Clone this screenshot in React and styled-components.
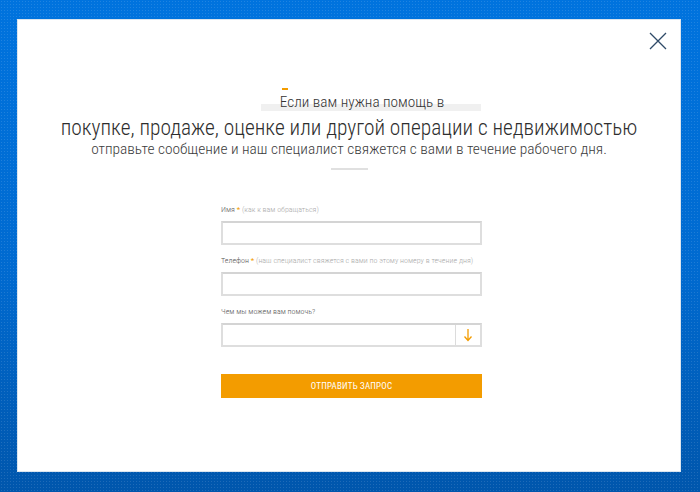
import React from "react";
import styled, { createGlobalStyle } from "styled-components";

const Global = createGlobalStyle`
  html, body {
    margin: 0;
    padding: 0;
  }
  body {
    width: 700px;
    height: 492px;
    overflow: hidden;
    font-family: "Roboto Condensed", "Liberation Sans Narrow", "DejaVu Sans Condensed", Roboto, sans-serif;
    font-weight: 300;
    background-color: #0066cc;
    background-image:
      radial-gradient(rgba(255, 255, 255, 0.12) 0.6px, transparent 0.9px),
      linear-gradient(180deg, #0073de 0%, #006ad0 55%, #0056ac 100%);
    background-size: 3px 3px, 100% 100%;
  }
`;

const Page = styled.div`
  padding: 19px 19px 20px 17px;
  box-sizing: border-box;
  height: 492px;
`;

const Modal = styled.div`
  position: relative;
  width: 664px;
  height: 453px;
  box-sizing: border-box;
  background: #fff;
  border: 1px solid #dbe5ef;
  padding-top: 73px;
  display: flex;
  flex-direction: column;
  align-items: center;
`;

const Close = styled.button`
  position: absolute;
  top: 12px;
  right: 13px;
  width: 18px;
  height: 18px;
  padding: 0;
  border: 0;
  background: none;
  cursor: pointer;
`;

const Lead = styled.div`
  position: relative;
  margin-left: 44px;
  padding: 0 37px 0 19px;
  font-size: 15.3px;
  line-height: 18px;
  color: #333;
  background: linear-gradient(180deg, transparent 0, transparent 11px, #f0f0f0 11px, #f0f0f0 18px, transparent 18px);

  &::before {
    content: "";
    position: absolute;
    left: 21px;
    top: -5px;
    width: 6px;
    height: 2px;
    background: #f39c00;
  }
`;

const Title = styled.h1`
  margin: 4px 0 0;
  font-size: 21.4px;
  font-weight: 300;
  line-height: 26px;
  color: #2e2e2e;
  white-space: nowrap;
`;

const Sub = styled.p`
  margin: 0;
  font-size: 15.4px;
  line-height: 16px;
  color: #3c3c3c;
  white-space: nowrap;
`;

const Divider = styled.div`
  width: 37px;
  height: 2px;
  margin-top: 11px;
  background: #e0e0e0;
`;

const Form = styled.form`
  width: 261px;
  margin-top: 35px;
  margin-left: 5px;
  display: flex;
  flex-direction: column;
`;

const Field = styled.div`
  margin-bottom: 11px;
`;

const Label = styled.label`
  display: block;
  font-size: 8px;
  line-height: 10px;
  color: #555;
  margin-bottom: 6px;

  b {
    font-weight: 400;
    color: #f39c00;
  }
  span {
    color: #aaa;
  }
`;

const Input = styled.input`
  display: block;
  width: 100%;
  height: 24px;
  box-sizing: border-box;
  border: 2px solid #dedede;
  border-top-color: #d4d4d4;
  background: #fff;
  outline: none;
  font: inherit;
  font-size: 11px;
  padding: 0 6px;
`;

const Select = styled.div`
  display: flex;
  height: 24px;
  box-sizing: border-box;
  border: 2px solid #dedede;
  border-top-color: #d4d4d4;
`;

const SelectValue = styled.div`
  flex: 1;
`;

const SelectArrow = styled.div`
  width: 24px;
  border-left: 1px solid #dcdcdc;
  display: flex;
  align-items: center;
  justify-content: center;
`;

const Submit = styled.button`
  margin-top: 16px;
  height: 24px;
  border: 0;
  background: #f39c00;
  color: #fff;
  font: inherit;
  font-size: 9px;
  font-weight: 400;
  text-transform: uppercase;
  letter-spacing: 0.2px;
  cursor: pointer;
`;

export default function App() {
  return (
    <Page>
      <Global />
      <Modal>
        <Close aria-label="Закрыть">
          <svg width="18" height="18" viewBox="0 0 18 18">
            <path d="M1 1 L17 17 M17 1 L1 17" stroke="#2f4a68" strokeWidth="1.3" fill="none" />
          </svg>
        </Close>
        <Lead>Если вам нужна помощь в</Lead>
        <Title>покупке, продаже, оценке или другой операции с недвижимостью</Title>
        <Sub>отправьте сообщение и наш специалист свяжется с вами в течение рабочего дня.</Sub>
        <Divider />
        <Form onSubmit={(e) => e.preventDefault()}>
          <Field>
            <Label>
              Имя <b>*</b> <span>(как к вам обращаться)</span>
            </Label>
            <Input type="text" />
          </Field>
          <Field>
            <Label>
              Телефон <b>*</b> <span>(наш специалист свяжется с вами по этому номеру в течение дня)</span>
            </Label>
            <Input type="tel" />
          </Field>
          <Field>
            <Label>Чем мы можем вам помочь?</Label>
            <Select>
              <SelectValue />
              <SelectArrow>
                <svg width="10" height="14" viewBox="0 0 10 14">
                  <path d="M5 1 V12 M1.5 8.5 L5 12.5 L8.5 8.5" stroke="#f39c00" strokeWidth="1.3" fill="none" />
                </svg>
              </SelectArrow>
            </Select>
          </Field>
          <Submit type="submit">Отправить запрос</Submit>
        </Form>
      </Modal>
    </Page>
  );
}
